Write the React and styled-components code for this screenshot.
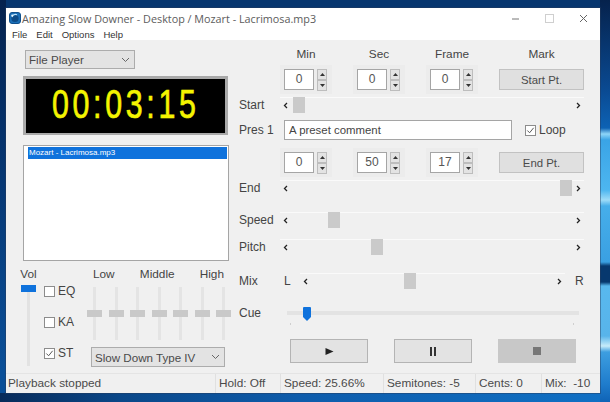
import React from 'react';
import styled, { createGlobalStyle } from 'styled-components';

const GlobalStyle = createGlobalStyle`
	html, body {
		margin: 0;
		padding: 0;
	}
	body {
		width: 610px;
		height: 402px;
		overflow: hidden;
		font-family: 'Liberation Sans', Arial, sans-serif;
		background-color: #07366f;
		background-image:
			linear-gradient(180deg, #06224c 0, #0a4a92 90px, #0d62b4 128px, #8fd6f8 134px, #3aa4e6 140px, #4db6f0 190px, #9fdcf8 200px, #46aeea 206px, #3aa0e2 262px, #07386e 266px, #07386e 282px, #58b8ee 286px, #58b4ea 336px, #c8ecfa 346px, #3d9ee0 352px, #1f7ccc 384px, #0f63b6 402px),
			linear-gradient(90deg, #082b5a 0, #0a4788 120px, #0e5cab 300px, #1070c4 600px),
			linear-gradient(180deg, #05224e 0, #05316a 130px, #0a4f98 370px);
		background-size: 10px 402px, 610px 10px, 6px 402px;
		background-position: 600px 0, 0 393px, 0 0;
		background-repeat: no-repeat;
	}
`;

const Window = styled.div`
	box-sizing: border-box;
	width: 594px;
	height: 385px;
	margin: 8px 0 0 6px;
	display: flex;
	flex-direction: column;
	background: #f0f0f0;
	color: #444;
	font-size: 12px;
	box-shadow: 0 0 0 1px rgba(40, 60, 90, 0.45);
`;

const Header = styled.header`
	height: 32px;
	flex: none;
	background: #fff;
	font-family: 'Open Sans', 'Noto Sans', sans-serif;
	color: #555;
`;

const TitleRow = styled.div`
	display: flex;
	align-items: center;
	height: 20px;
	padding: 0 0 0 3px;
	font-size: 10.8px;
	white-space: nowrap;
`;

const TitleText = styled.span`
	margin-left: 1px;
	flex: 1;
	color: #5c5c5c;
`;

const Caption = styled.span`
	display: flex;
	width: 34px;
	justify-content: center;
`;

const MenuRow = styled.nav`
	display: flex;
	height: 12px;
	align-items: center;
	padding-left: 6px;
	font-family: 'Liberation Sans', Arial, sans-serif;
	font-size: 9.5px;
	color: #333;
	gap: 9px;
`;

const Body = styled.main`
	flex: 1;
	min-height: 0;
	display: flex;
`;

const LeftColumn = styled.section`
	width: 233px;
	flex: none;
	box-sizing: border-box;
	padding: 10px 0 0 15px;
	display: flex;
	flex-direction: column;
`;

const RightColumn = styled.section`
	flex: 1;
	padding-top: 7px;
	display: flex;
	flex-direction: column;
`;

const FakeSelect = styled.div`
	box-sizing: border-box;
	width: ${p => p.$width}px;
	height: ${p => p.$height}px;
	margin: ${p => p.$top || 0}px 0 0 ${p => p.$left || 0}px;
	border: 1px solid #acacac;
	background: #e3e3e3;
	display: flex;
	align-items: center;
	justify-content: space-between;
	padding: 0 4px 0 3px;
	font-size: 11.6px;
	color: #4a4a4a;
	white-space: nowrap;
`;

const Display = styled.div`
	box-sizing: border-box;
	width: 205px;
	height: 59px;
	margin: 7px 0 0 2px;
	border: 3px solid #a9a9a9;
	border-bottom-width: 2px;
	padding-bottom: 4px;
	background: #000;
	color: #f4f400;
	display: flex;
	align-items: center;
	justify-content: center;
	overflow: hidden;
`;

const TimeText = styled.span`
	font-family: 'Liberation Sans', Arial, sans-serif;
	font-size: 41px;
	letter-spacing: 5px;
	transform: scaleX(0.74);
	white-space: nowrap;
	-webkit-text-stroke: 0.7px #f4f400;
`;

const ListBox = styled.div`
	box-sizing: border-box;
	width: 206px;
	height: 116px;
	margin: 10px 0 0 2px;
	border: 1px solid #a5a5a5;
	background: #fff;
	padding: 1px 1px 0 4px;
`;

const ListItem = styled.div`
	height: 12px;
	background: #0f72dc;
	color: #fff;
	font-size: 8px;
	line-height: 12px;
	padding-left: 1px;
`;

const MixerPanel = styled.div`
	display: flex;
	margin-top: 6px;
	height: 100px;
`;

const VolColumn = styled.div`
	width: 15px;
	flex: none;
	display: flex;
	flex-direction: column;
	align-items: center;
`;

const SmallHead = styled.div`
	height: 14px;
	line-height: 14px;
	text-align: center;
	font-size: 11.8px;
`;

const VolThumb = styled.div`
	width: 15px;
	height: 7px;
	margin-top: 4px;
	background: #0f72dc;
`;

const VolTrack = styled.div`
	width: 3px;
	height: 74px;
	background: #e2e2e2;
`;

const CheckColumn = styled.div`
	width: 44px;
	flex: none;
	display: flex;
	flex-direction: column;
	gap: 17px;
	padding: 17px 0 0 8px;
	box-sizing: border-box;
`;

const CheckRow = styled.label`
	display: flex;
	align-items: center;
	gap: 3px;
	height: 14px;
	font-size: 12px;
	margin-left: ${p => p.$left || 0}px;
`;

const Box = styled.span`
	width: 9px;
	height: 9px;
	border: 1px solid #8c8c8c;
	background: #fff;
	display: flex;
	align-items: center;
	justify-content: center;
`;

const EqColumn = styled.div`
	width: 144px;
	flex: none;
	display: flex;
	flex-direction: column;
	margin-left: 7px;
`;

const EqHeads = styled.div`
	display: flex;
	justify-content: space-between;
	padding: 0 7px 0 6px;
`;

const Faders = styled.div`
	display: flex;
	justify-content: space-between;
	height: 53px;
	margin-top: 6px;
`;

const Fader = styled.div`
	width: 15px;
	display: flex;
	justify-content: center;
	align-items: center;
	background: linear-gradient(#e4e4e4, #e4e4e4) center / 3px 100% no-repeat;
`;

const FaderThumb = styled.span`
	width: 15px;
	height: 7px;
	background: #c9c9c9;
`;

const SpinLine = styled.div`
	display: flex;
	margin-left: 41px;
	width: 304px;
	margin-top: ${p => p.$top || 0}px;
`;

const HeadCell = styled.div`
	width: ${p => p.$width}px;
	flex: none;
	text-align: center;
	height: 14px;
	line-height: 14px;
	font-size: 11.8px;
`;

const SpinGroup = styled.div`
	box-sizing: border-box;
	width: 52px;
	height: 29px;
	margin-right: ${p => p.$gap}px;
	flex: none;
	background: #ececec;
	padding: 4px 0 0 4px;
	display: flex;
	gap: 3px;
`;

const SpinInput = styled.div`
	box-sizing: border-box;
	width: 30px;
	height: 21px;
	border: 1px solid #a5a5a5;
	background: #fff;
	text-align: center;
	line-height: 19px;
	font-size: 12px;
	color: #555;
`;

const SpinButtons = styled.div`
	display: flex;
	flex-direction: column;
	width: 10px;
	height: 22px;
`;

const SpinButton = styled.div`
	flex: 1;
	box-sizing: border-box;
	border: 1px solid #bdbdbd;
	background: #e3e3e3;
	display: flex;
	align-items: center;
	justify-content: center;
`;

const MarkButton = styled.button`
	box-sizing: border-box;
	width: 85px;
	height: 21px;
	margin: 4px 0 0 ${p => p.$left}px;
	padding: 0;
	border: 1px solid #c2c2c2;
	background: #e0e0e0;
	color: #4a4a4a;
	font: 11.4px 'Liberation Sans', Arial, sans-serif;
`;

const ControlRow = styled.div`
	display: flex;
	align-items: center;
	height: ${p => p.$height || 16}px;
	margin-top: ${p => p.$top || 0}px;
`;

const RowLabel = styled.span`
	width: 41px;
	flex: none;
	font-size: 12px;
`;

const ScrollBar = styled.div`
	box-sizing: border-box;
	width: ${p => p.$width}px;
	height: 16px;
	flex: none;
	border-top: 1px solid #fafafa;
	display: flex;
	align-items: center;
	justify-content: space-between;
	padding: 0 3px;
	position: relative;
`;

const ScrollThumb = styled.span`
	position: absolute;
	left: ${p => p.$left}px;
	top: -1px;
	width: 12px;
	height: 16px;
	background: #cacaca;
`;

const SideLetter = styled.span`
	box-sizing: border-box;
	width: ${p => p.$width}px;
	flex: none;
	font-size: 12px;
	color: #444;
	padding-left: ${p => p.$pad}px;
`;

const PresetInput = styled.div`
	box-sizing: border-box;
	width: 228px;
	height: 20px;
	margin-left: 4px;
	border: 1px solid #a5a5a5;
	background: #fff;
	padding-left: 4px;
	line-height: 18px;
	font-size: 11.4px;
	color: #444;
`;

const CueTrack = styled.div`
	width: 292px;
	height: 4px;
	margin-left: 7px;
	background: #e3e3e3;
	position: relative;
`;

const CueThumb = styled.svg`
	position: absolute;
	left: 16px;
	top: -4px;
`;

const Ticks = styled.div`
	display: flex;
	justify-content: space-between;
	width: 284px;
	height: 2px;
	margin: 2px 0 0 51px;
`;

const Tick = styled.span`
	width: 1px;
	height: 2px;
	background: #cfcfcf;
`;

const Transport = styled.div`
	display: flex;
	gap: 26px;
	margin: 14px 0 0 51px;
`;

const TransportButton = styled.button`
	box-sizing: border-box;
	width: 78px;
	height: 24px;
	padding: 0;
	border: 1px solid ${p => (p.$off ? '#c8c8c8' : '#b4b4b4')};
	background: ${p => (p.$off ? '#c8c8c8' : '#e3e3e3')};
	display: flex;
	align-items: center;
	justify-content: center;
`;

const StatusBar = styled.footer`
	height: 20px;
	flex: none;
	display: flex;
	border-top: 1px solid #e4e4e4;
	box-sizing: border-box;
	background: #f0f0f0;
`;

const StatusCell = styled.span`
	width: ${p => p.$width}px;
	flex: none;
	box-sizing: border-box;
	border-right: ${p => (p.$last ? 'none' : '1px solid #e0e0e0')};
	padding-left: ${p => p.$pad}px;
	line-height: 19px;
	font-size: 11.8px;
	color: #4a4a4a;
	white-space: nowrap;
`;

const Chevron = ({ dir }) => (
	<svg width="5" height="7" viewBox="0 0 5 7">
		<path
			d={dir === 'left' ? 'M4 1 L1.5 3.5 L4 6' : 'M1 1 L3.5 3.5 L1 6'}
			fill="none"
			stroke="#222"
			strokeWidth="1.3"
		/>
	</svg>
);

const DownCaret = () => (
	<svg width="9" height="6" viewBox="0 0 9 6">
		<path d="M1 1 L4.5 4.5 L8 1" fill="none" stroke="#666" strokeWidth="1" />
	</svg>
);

const Spinner = ({ value, gap }) => (
	<SpinGroup $gap={gap}>
		<SpinInput>{value}</SpinInput>
		<SpinButtons>
			<SpinButton>
				<svg width="5" height="3" viewBox="0 0 5 3">
					<path d="M2.5 0 L5 3 L0 3 Z" fill="#333" />
				</svg>
			</SpinButton>
			<SpinButton>
				<svg width="5" height="3" viewBox="0 0 5 3">
					<path d="M0 0 L5 0 L2.5 3 Z" fill="#333" />
				</svg>
			</SpinButton>
		</SpinButtons>
	</SpinGroup>
);

const Scroll = ({ width = 304, left }) => (
	<ScrollBar $width={width}>
		<Chevron dir="left" />
		<ScrollThumb $left={left} />
		<Chevron dir="right" />
	</ScrollBar>
);

const Tickmark = () => (
	<svg width="10" height="9" viewBox="0 0 10 9">
		<path d="M1.5 4.5 L4 7 L8.5 1.5" fill="none" stroke="#555" strokeWidth="1.1" />
	</svg>
);

const Check = ({ label, checked, left }) => (
	<CheckRow $left={left}>
		<Box>{checked && <Tickmark />}</Box>
		{label}
	</CheckRow>
);

const AppIcon = () => (
	<svg width="12" height="12" viewBox="0 0 12 12">
		<rect x="0.5" y="0.5" width="11" height="11" rx="2.5" fill="#1b6fb8" stroke="#0f4f8c" />
		<circle cx="6" cy="6.5" r="3.6" fill="#0d4a86" />
		<path d="M3 5 A4 4 0 0 1 8 2.8" fill="none" stroke="#bfe3fa" strokeWidth="1.2" />
		<circle cx="3.2" cy="3.4" r="1" fill="#e8f6ff" />
	</svg>
);

const App = () => {
	const faders = [0, 1, 2, 3, 4, 5, 6];

	return (
		<>
			<GlobalStyle />
			<Window>
				<Header>
					<TitleRow>
						<AppIcon />
						<TitleText>Amazing Slow Downer - Desktop / Mozart - Lacrimosa.mp3</TitleText>
						<Caption>
							<svg width="9" height="9" viewBox="0 0 9 9">
								<path d="M1 5 H8" stroke="#777" strokeWidth="1" />
							</svg>
						</Caption>
						<Caption>
							<svg width="9" height="9" viewBox="0 0 9 9">
								<rect x="0.5" y="0.5" width="8" height="8" fill="none" stroke="#cfcfcf" />
							</svg>
						</Caption>
						<Caption>
							<svg width="9" height="9" viewBox="0 0 9 9">
								<path d="M1 1 L8 8 M8 1 L1 8" stroke="#666" strokeWidth="1" />
							</svg>
						</Caption>
					</TitleRow>
					<MenuRow>
						<span>File</span>
						<span>Edit</span>
						<span>Options</span>
						<span>Help</span>
					</MenuRow>
				</Header>

				<Body>
					<LeftColumn>
						<FakeSelect $width={110} $height={19} $left={4}>
							File Player
							<DownCaret />
						</FakeSelect>
						<Display>
							<TimeText>00:03:15</TimeText>
						</Display>
						<ListBox>
							<ListItem>Mozart - Lacrimosa.mp3</ListItem>
						</ListBox>
						<MixerPanel>
							<VolColumn>
								<SmallHead>Vol</SmallHead>
								<VolThumb />
								<VolTrack />
							</VolColumn>
							<CheckColumn>
								<Check label="EQ" />
								<Check label="KA" />
								<Check label="ST" checked />
							</CheckColumn>
							<EqColumn>
								<EqHeads>
									<SmallHead>Low</SmallHead>
									<SmallHead>Middle</SmallHead>
									<SmallHead>High</SmallHead>
								</EqHeads>
								<Faders>
									{faders.map(i => (
										<Fader key={i}>
											<FaderThumb />
										</Fader>
									))}
								</Faders>
								<FakeSelect $width={134} $height={20} $left={4} $top={7}>
									Slow Down Type IV
									<DownCaret />
								</FakeSelect>
							</EqColumn>
						</MixerPanel>
					</LeftColumn>

					<RightColumn>
						<SpinLine>
							<HeadCell $width={52}>Min</HeadCell>
							<HeadCell $width={21} />
							<HeadCell $width={52}>Sec</HeadCell>
							<HeadCell $width={21} />
							<HeadCell $width={52}>Frame</HeadCell>
							<HeadCell $width={21} />
							<HeadCell $width={85}>Mark</HeadCell>
						</SpinLine>
						<SpinLine $top={4}>
							<Spinner value="0" gap={21} />
							<Spinner value="0" gap={21} />
							<Spinner value="0" gap={0} />
							<MarkButton $left={21}>Start Pt.</MarkButton>
						</SpinLine>
						<ControlRow $top={3}>
							<RowLabel>Start</RowLabel>
							<Scroll left={13} />
						</ControlRow>
						<ControlRow $top={7} $height={20}>
							<RowLabel>Pres 1</RowLabel>
							<PresetInput>A preset comment</PresetInput>
							<Check label="Loop" left={13} checked />
						</ControlRow>
						<SpinLine $top={8}>
							<Spinner value="0" gap={21} />
							<Spinner value="50" gap={21} />
							<Spinner value="17" gap={0} />
							<MarkButton $left={21}>End Pt.</MarkButton>
						</SpinLine>
						<ControlRow $top={3}>
							<RowLabel>End</RowLabel>
							<Scroll left={280} />
						</ControlRow>
						<ControlRow $top={16}>
							<RowLabel>Speed</RowLabel>
							<Scroll left={48} />
						</ControlRow>
						<ControlRow $top={11}>
							<RowLabel>Pitch</RowLabel>
							<Scroll left={91} />
						</ControlRow>
						<ControlRow $top={18}>
							<RowLabel>Mix</RowLabel>
							<SideLetter $width={20} $pad={4}>L</SideLetter>
							<Scroll width={265} left={104} />
							<SideLetter $width={18} $pad={10}>R</SideLetter>
						</ControlRow>
						<ControlRow $top={16}>
							<RowLabel>Cue</RowLabel>
							<CueTrack>
								<CueThumb width="8" height="14" viewBox="0 0 8 14">
									<path d="M1 0 H7 Q8 0 8 1 V10 L4 14 L0 10 V1 Q0 0 1 0 Z" fill="#0f72dc" />
								</CueThumb>
							</CueTrack>
						</ControlRow>
						<Ticks>
							<Tick />
							<Tick />
						</Ticks>
						<Transport>
							<TransportButton>
								<svg width="9" height="9" viewBox="0 0 9 9">
									<path d="M0.5 1 L8.5 4.5 L0.5 8 Z" fill="#222" />
								</svg>
							</TransportButton>
							<TransportButton>
								<svg width="8" height="9" viewBox="0 0 8 9">
									<path d="M1 0 H3 V9 H1 Z M5 0 H7 V9 H5 Z" fill="#333" />
								</svg>
							</TransportButton>
							<TransportButton $off>
								<svg width="8" height="8" viewBox="0 0 8 8">
									<rect width="8" height="8" fill="#777" />
								</svg>
							</TransportButton>
						</Transport>
					</RightColumn>
				</Body>

				<StatusBar>
					<StatusCell $width={210} $pad={2}>Playback stopped</StatusCell>
					<StatusCell $width={65} $pad={3}>Hold: Off</StatusCell>
					<StatusCell $width={103} $pad={3}>Speed: 25.66%</StatusCell>
					<StatusCell $width={92} $pad={3}>Semitones: -5</StatusCell>
					<StatusCell $width={66} $pad={3}>Cents: 0</StatusCell>
					<StatusCell $width={58} $pad={3} $last>Mix: &nbsp;-10</StatusCell>
				</StatusBar>
			</Window>
		</>
	);
};

export default App;
